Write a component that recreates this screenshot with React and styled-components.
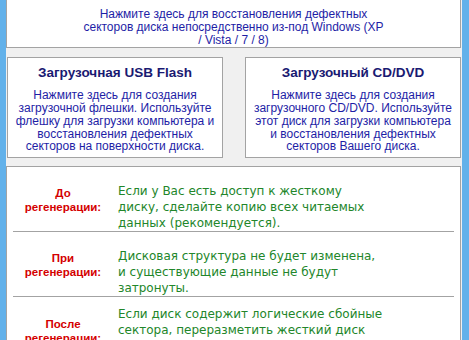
import React from 'react';
import styled, { createGlobalStyle } from 'styled-components';

const GlobalStyle = createGlobalStyle`
  html, body {
    margin: 0;
    padding: 0;
    background: #f0f0f0;
    overflow: hidden;
  }
`;

const Window = styled.div`
  box-sizing: border-box;
  width: 469px;
  height: 340px;
  overflow: hidden;
  background: #f0f0f0;
  border-left: 6px solid #62b1ea;
  border-right: 7px solid #62b1ea;
  display: flex;
  flex-direction: column;
`;

const Panel = styled.div`
  background: #ffffff;
  border: 1px solid #a3a3a3;
  border-top: ${(p) => (p.$noTop ? 'none' : '1px solid #a3a3a3')};
  margin-right: 1px;
`;

const TopPanel = styled(Panel)`
  padding: 8px 0 1px;
  text-align: center;
`;

const BlueText = styled.div`
  font-family: 'Liberation Sans', Arial, sans-serif;
  font-size: 12px;
  line-height: 12.75px;
  color: #1e1ea6;
`;

const Cards = styled.div`
  display: flex;
  justify-content: space-between;
  gap: 22px;
  margin: 9px 1px 8px 1px;
`;

const Card = styled.div`
  flex: 1;
  box-sizing: border-box;
  height: 101px;
  background: #ffffff;
  border: 1px solid #a3a3a3;
  padding-top: 7px;
  text-align: center;
`;

const CardTitle = styled.div`
  font-family: 'Liberation Sans', Arial, sans-serif;
  font-weight: bold;
  font-size: 13.5px;
  line-height: 16px;
  color: #1a1a72;
  margin-bottom: 8px;
`;

const Rows = styled(Panel)`
  flex: 1;
  padding: 0 6px 0 6px;
`;

const Row = styled.div`
  display: flex;
  align-items: center;
  padding-top: ${(p) => p.$top}px;
  border-bottom: ${(p) => (p.$last ? 'none' : '1px solid #a3a3a3')};
`;

const Label = styled.div`
  width: 100px;
  flex-shrink: 0;
  text-align: center;
  font-family: 'Liberation Sans', Arial, sans-serif;
  font-weight: bold;
  font-size: 11.5px;
  line-height: 14px;
  color: #d40000;
  margin-bottom: 14px;
`;

const Note = styled.div`
  margin-left: 5px;
  font-family: 'DejaVu Sans', Verdana, sans-serif;
  font-size: 12px;
  line-height: 16px;
  color: #22862a;
  white-space: nowrap;
`;

const cards = [
  {
    title: 'Загрузочная USB Flash',
    lines: [
      'Нажмите здесь для создания',
      'загрузочной флешки. Используйте',
      'флешку для загрузки компьютера и',
      'восстановления дефектных',
      'секторов на поверхности диска.',
    ],
  },
  {
    title: 'Загрузочный CD/DVD',
    lines: [
      'Нажмите здесь для создания',
      'загрузочного CD/DVD. Используйте',
      'этот диск для загрузки компьютера',
      'и восстановления дефектных',
      'секторов Вашего диска.',
    ],
  },
];

const rows = [
  {
    label: ['До', 'регенерации:'],
    top: 16,
    lines: [
      'Если у Вас есть доступ к жесткому',
      'диску, сделайте копию всех читаемых',
      'данных (рекомендуется).',
    ],
  },
  {
    label: ['При', 'регенерации:'],
    top: 16,
    lines: [
      'Дисковая структура не будет изменена,',
      'и существующие данные не будут',
      'затронуты.',
    ],
  },
  {
    label: ['После', 'регенерации:'],
    top: 9,
    lines: [
      'Если диск содержит логические сбойные',
      'сектора, переразметить жесткий диск',
      'и отформатировать его заново',
      '(рекомендуется).',
    ],
  },
];

const Lines = ({ lines }) =>
  lines.map((l, i) => (
    <React.Fragment key={i}>
      {l}
      {i < lines.length - 1 && <br />}
    </React.Fragment>
  ));

export default function App() {
  return (
    <>
      <GlobalStyle />
      <Window>
        <TopPanel $noTop>
          <BlueText>
            <Lines
              lines={[
                'Нажмите здесь для восстановления дефектных',
                'секторов диска непосредственно из-под Windows (XP',
                '/ Vista / 7 / 8)',
              ]}
            />
          </BlueText>
        </TopPanel>
        <Cards>
          {cards.map((c) => (
            <Card key={c.title}>
              <CardTitle>{c.title}</CardTitle>
              <BlueText>
                <Lines lines={c.lines} />
              </BlueText>
            </Card>
          ))}
        </Cards>
        <Rows>
          {rows.map((r, i) => (
            <Row key={i} $top={r.top} $last={i === rows.length - 1}>
              <Label>
                <Lines lines={r.label} />
              </Label>
              <Note>
                <Lines lines={r.lines} />
              </Note>
            </Row>
          ))}
        </Rows>
      </Window>
    </>
  );
}
